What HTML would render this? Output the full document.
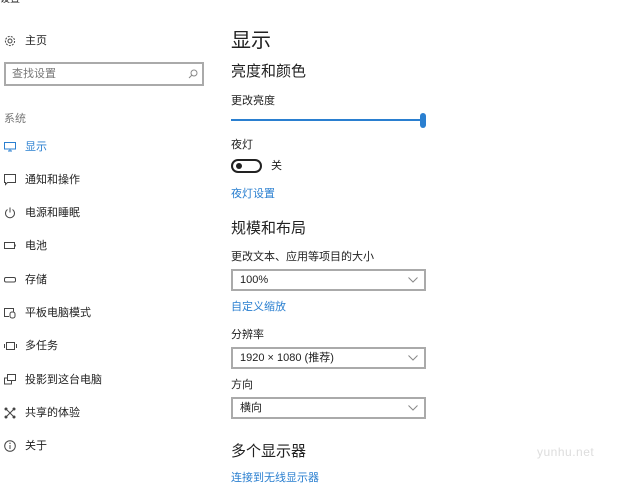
<!DOCTYPE html>
<html><head><meta charset="utf-8"><style>
*{margin:0;padding:0;box-sizing:border-box}
body{width:635px;height:476px;overflow:hidden;background:#fff;position:relative;font-family:"Liberation Sans","Noto Sans CJK SC",sans-serif;color:#222;font-size:11px}
.a{position:absolute;white-space:nowrap;line-height:1}
.ic{position:absolute;left:4px}
.blue{color:#2a7fd0}
.box{position:absolute;left:231px;width:195px;height:22px;border:2px solid #aaa;}
.box span{position:absolute;left:7px;top:3px;font-size:11px;line-height:1.1}
.box svg{position:absolute;right:6px;top:6px}
</style></head><body>
<div class="a" style="left:0;top:-5px;font-size:10px">设置</div>

<svg class="ic" style="top:35px" width="12" height="12" viewBox="0 0 12 12"><circle cx="6" cy="6" r="2" fill="none" stroke="#444"/><circle cx="6" cy="6" r="4.6" fill="none" stroke="#444" stroke-dasharray="2 1.2"/></svg>
<div class="a" style="left:25px;top:36px">主页</div>

<div style="position:absolute;left:4px;top:62px;width:200px;height:24px;border:2px solid #aaa"></div>
<div class="a" style="left:12px;top:69px;color:#777">查找设置</div>
<svg style="position:absolute;left:188px;top:69px" width="10" height="10" viewBox="0 0 10 10"><circle cx="6" cy="4" r="3" fill="none" stroke="#888"/><path d="M4 6 L1 9" stroke="#888"/></svg>

<div class="a" style="left:4px;top:114px;color:#777">系统</div>

<svg class="ic" style="top:142px" width="12" height="10" viewBox="0 0 12 10"><rect x="0.5" y="0.5" width="11" height="6.5" fill="none" stroke="#2a7fd0"/><path d="M6 7v2M4 9h4" stroke="#2a7fd0"/></svg>
<div class="a blue" style="left:25px;top:142px">显示</div>

<svg class="ic" style="top:174px" width="12" height="12" viewBox="0 0 12 12"><path d="M0.5 0.5h11v8h-8l-2 2v-2h-1z" fill="none" stroke="#444"/></svg>
<div class="a" style="left:25px;top:175px">通知和操作</div>

<svg class="ic" style="top:207px" width="12" height="12" viewBox="0 0 12 12"><path d="M3.5 2.5A4.5 4.5 0 1 0 8.5 2.5" fill="none" stroke="#444"/><path d="M6 0.5v5" stroke="#444"/></svg>
<div class="a" style="left:25px;top:208px">电源和睡眠</div>

<svg class="ic" style="top:242px" width="13" height="8" viewBox="0 0 13 8"><rect x="0.5" y="0.5" width="10" height="6" fill="none" stroke="#444"/><path d="M11 2.5v2" stroke="#444" stroke-width="1.5"/></svg>
<div class="a" style="left:25px;top:241px">电池</div>

<svg class="ic" style="top:277px" width="12" height="6" viewBox="0 0 12 6"><rect x="0.5" y="0.5" width="11" height="4.5" rx="1.5" fill="none" stroke="#444"/></svg>
<div class="a" style="left:25px;top:275px">存储</div>

<svg class="ic" style="top:307px" width="12" height="12" viewBox="0 0 12 12"><path d="M5 9.5H0.5v-8h9v3" fill="none" stroke="#444"/><rect x="6" y="5" width="5" height="6" rx="2" fill="none" stroke="#444"/></svg>
<div class="a" style="left:25px;top:308px">平板电脑模式</div>

<svg class="ic" style="top:342px" width="13" height="8" viewBox="0 0 13 8"><rect x="2.5" y="0.5" width="8" height="7" fill="none" stroke="#444"/><path d="M0.5 2v4M12.5 2v4" stroke="#444"/></svg>
<div class="a" style="left:25px;top:341px">多任务</div>

<svg class="ic" style="top:374px" width="12" height="11" viewBox="0 0 12 11"><rect x="3.5" y="0.5" width="8" height="6" fill="none" stroke="#444"/><path d="M3.5 4H0.5v6h7V7" fill="none" stroke="#444"/></svg>
<div class="a" style="left:25px;top:375px">投影到这台电脑</div>

<svg class="ic" style="top:407px" width="12" height="12" viewBox="0 0 12 12"><path d="M3 3L9 9M9 3L3 9" stroke="#444"/><circle cx="2" cy="2" r="1.5" fill="#444"/><circle cx="10" cy="2" r="1.5" fill="#444"/><circle cx="2" cy="10" r="1.5" fill="#444"/><circle cx="10" cy="10" r="1.5" fill="#444"/></svg>
<div class="a" style="left:25px;top:408px">共享的体验</div>

<svg class="ic" style="top:440px" width="12" height="12" viewBox="0 0 12 12"><circle cx="6" cy="6" r="5.3" fill="none" stroke="#444"/><path d="M6 5v4" stroke="#444"/><circle cx="6" cy="3.3" r="0.7" fill="#444"/></svg>
<div class="a" style="left:25px;top:441px">关于</div>

<!-- right -->
<div class="a" style="left:231px;top:31px;font-size:20px">显示</div>
<div class="a" style="left:231px;top:64px;font-size:15px">亮度和颜色</div>
<div class="a" style="left:231px;top:96px">更改亮度</div>
<div style="position:absolute;left:231px;top:119px;width:192px;height:2px;background:#2a7fd0"></div>
<div style="position:absolute;left:420px;top:113px;width:6px;height:15px;border-radius:3px;background:#2a7fd0"></div>
<div class="a" style="left:231px;top:140px">夜灯</div>
<div style="position:absolute;left:231px;top:159px;width:31px;height:14px;border:2px solid #222;border-radius:7px"></div>
<div style="position:absolute;left:236px;top:163px;width:6px;height:6px;border-radius:50%;background:#222"></div>
<div class="a" style="left:271px;top:161px">关</div>
<div class="a blue" style="left:231px;top:189px">夜灯设置</div>

<div class="a" style="left:231px;top:221px;font-size:15px">规模和布局</div>
<div class="a" style="left:231px;top:252px">更改文本、应用等项目的大小</div>
<div class="box" style="top:269px"><span>100%</span><svg width="10" height="6" viewBox="0 0 10 6"><path d="M0.5 0.5L5 5L9.5 0.5" fill="none" stroke="#888"/></svg></div>
<div class="a blue" style="left:231px;top:302px">自定义缩放</div>
<div class="a" style="left:231px;top:330px">分辨率</div>
<div class="box" style="top:347px"><span>1920 × 1080 (推荐)</span><svg width="10" height="6" viewBox="0 0 10 6"><path d="M0.5 0.5L5 5L9.5 0.5" fill="none" stroke="#888"/></svg></div>
<div class="a" style="left:231px;top:380px">方向</div>
<div class="box" style="top:397px"><span>横向</span><svg width="10" height="6" viewBox="0 0 10 6"><path d="M0.5 0.5L5 5L9.5 0.5" fill="none" stroke="#888"/></svg></div>

<div class="a" style="left:231px;top:444px;font-size:15px">多个显示器</div>
<div class="a" style="left:537px;top:446px;font-size:12px;color:#ddd;letter-spacing:0.5px">yunhu.net</div>
<div class="a blue" style="left:231px;top:473px">连接到无线显示器</div>
</body></html>
